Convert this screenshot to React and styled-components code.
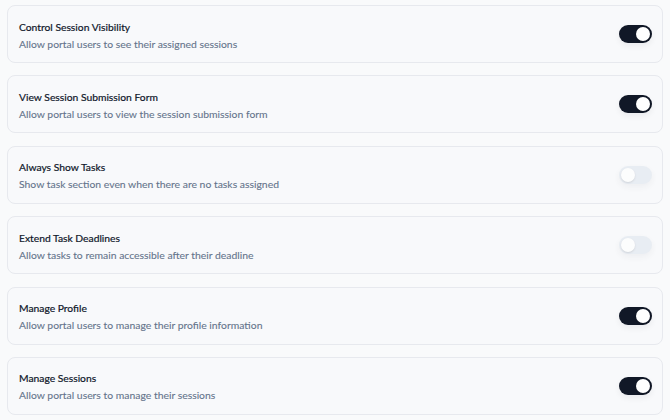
import React from 'react';
import styled, { createGlobalStyle } from 'styled-components';

const Global = createGlobalStyle`
  body {
    margin: 0;
    background: #f9fafb;
    font-family: Lato, "Noto Sans", sans-serif;
  }
`;

const List = styled.div`
  display: flex;
  flex-direction: column;
  gap: 12.4px;
  padding: 5px 7px;
`;

const Card = styled.div`
  display: flex;
  align-items: center;
  justify-content: space-between;
  height: 58px;
  box-sizing: border-box;
  padding: 3px 10px 0 11px;
  background: #f8f9fb;
  border: 1px solid #e7e9ee;
  border-radius: 8px;
`;

const Text = styled.div`
  display: flex;
  flex-direction: column;
  gap: 4px;
`;

const Title = styled.div`
  font-size: 10.3px;
  font-weight: 400;
  color: #0f172a;
  line-height: 13px;
  -webkit-text-stroke: 0.2px #0f172a;
`;

const Desc = styled.div`
  font-size: 10.4px;
  color: #64748b;
  line-height: 13px;
  -webkit-text-stroke: 0.1px #64748b;
`;

const Track = styled.div`
  width: 33px;
  height: 18px;
  margin-top: -3px;
  border-radius: 9px;
  background: ${(p) => (p.on ? '#111827' : '#e2e8f0')};
  display: flex;
  align-items: center;
  justify-content: ${(p) => (p.on ? 'flex-end' : 'flex-start')};
  padding: 0 2px;
  box-sizing: border-box;
  opacity: ${(p) => (p.on ? 1 : 0.7)};
  box-shadow: 0 3px 6px rgba(15, 23, 42, 0.06);
`;

const Knob = styled.div`
  width: 14px;
  height: 14px;
  border-radius: 50%;
  background: #fff;
  box-shadow: 0 1px 2px rgba(0, 0, 0, 0.15);
`;

const items = [
  ['Control Session Visibility', 'Allow portal users to see their assigned sessions', true],
  ['View Session Submission Form', 'Allow portal users to view the session submission form', true],
  ['Always Show Tasks', 'Show task section even when there are no tasks assigned', false],
  ['Extend Task Deadlines', 'Allow tasks to remain accessible after their deadline', false],
  ['Manage Profile', 'Allow portal users to manage their profile information', true],
  ['Manage Sessions', 'Allow portal users to manage their sessions', true],
];

export default () => (
  <>
    <Global />
    <List>
      {items.map(([t, d, on]) => (
        <Card key={t}>
          <Text>
            <Title>{t}</Title>
            <Desc>{d}</Desc>
          </Text>
          <Track on={on}>
            <Knob />
          </Track>
        </Card>
      ))}
    </List>
  </>
);
